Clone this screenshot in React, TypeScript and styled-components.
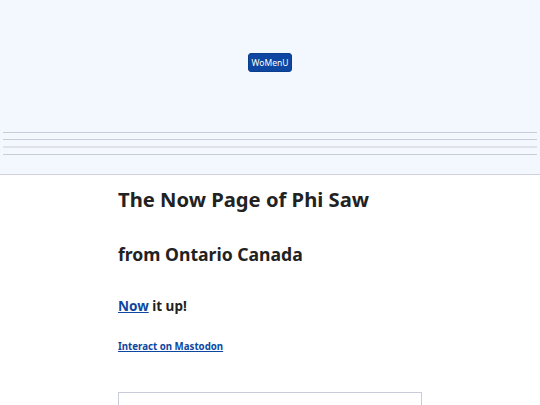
import styled, { createGlobalStyle } from "styled-components";

const Global = createGlobalStyle`
  html, body {
    margin: 0;
    padding: 0;
    background: #ffffff;
    font-family: "Noto Sans", "Open Sans", sans-serif;
    color: #222222;
  }
`;

const Header = styled.header`
  background: #f3f7fe;
  border-bottom: 1px solid #cdd1dc;
  height: 175px;
  padding: 53px 3px 0;
  box-sizing: border-box;
  display: flex;
  flex-direction: column;
  align-items: center;
`;

const MenuButton = styled.button`
  background: #0d47a1;
  color: #ffffff;
  border: 1px solid #0a3d8c;
  border-radius: 3px;
  font-family: "Noto Sans", sans-serif;
  font-size: 8.5px;
  height: 19px;
  padding: 0 3px;
`;

const Rules = styled.div`
  align-self: stretch;
  margin-top: 60px;
  display: flex;
  flex-direction: column;
  gap: 6px;
`;

const Rule = styled.hr<{ $soft?: boolean }>`
  margin: 0;
  border: none;
  height: ${(p) => (p.$soft ? "2px" : "1px")};
  background: ${(p) => (p.$soft ? "#dfe2ea" : "#c9ccd8")};
`;

const Main = styled.main`
  width: 304px;
  margin: 0 auto;
  padding-top: 10px;
`;

const Title = styled.h1`
  font-size: 20.2px;
  font-weight: 700;
  margin: 0;
  line-height: 28px;
`;

const Subtitle = styled.h2`
  font-size: 17.6px;
  font-weight: 700;
  margin: 29px 0 0;
  line-height: 24px;
`;

const Tagline = styled.h3`
  font-size: 13.5px;
  font-weight: 700;
  margin: 30px 0 0;
  line-height: 20px;
`;

const Link = styled.a`
  color: #0d47a1;
  text-decoration: underline;
`;

const Small = styled.p`
  font-size: 9.7px;
  font-weight: 700;
  line-height: 14px;
  margin: 24px 0 0;
`;

const Box = styled.div`
  margin-top: 38px;
  border: 1px solid #c9ccd8;
  height: 80px;
`;

export default function App() {
  return (
    <>
      <Global />
      <Header>
        <MenuButton>WoMenU</MenuButton>
        <Rules>
          <Rule />
          <Rule />
          <Rule $soft />
          <Rule />
        </Rules>
      </Header>
      <Main>
        <Title>The Now Page of Phi Saw</Title>
        <Subtitle>from Ontario Canada</Subtitle>
        <Tagline>
          <Link href="#">Now</Link> it up!
        </Tagline>
        <Small>
          <Link href="#">Interact on Mastodon</Link>
        </Small>
        <Box />
      </Main>
    </>
  );
}
